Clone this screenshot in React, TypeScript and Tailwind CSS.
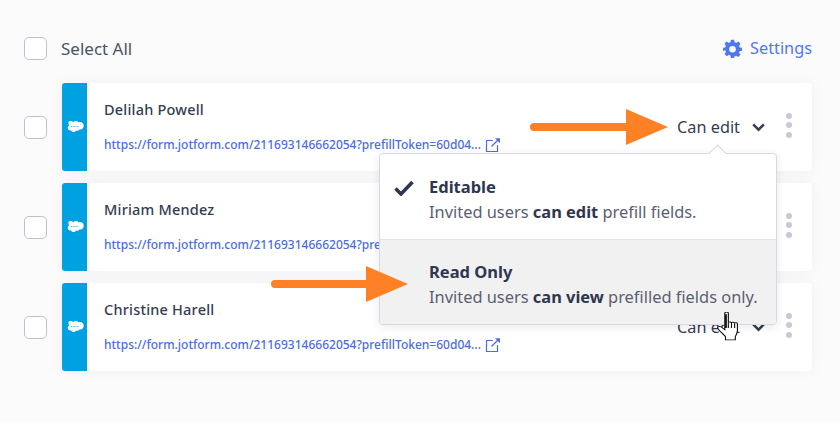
import { useState } from 'react'

const url = 'https://form.jotform.com/211693146662054?prefillToken=60d04...'
const people = ['Delilah Powell', 'Miriam Mendez', 'Christine Harell']

function Box() {
  return <span className="block w-[23px] h-[23px] shrink-0 rounded-[5px] border border-[#bfbfcf] bg-white" />
}

function Cloud() {
  return (
    <svg width="18" height="13" viewBox="0 0 18 13" className="block mt-[-2px]">
      <path
        fill="#fff"
        d="M7.400 2.200C8 1.300 9 .9 10 .9c1.200 0 2.200.6 2.700 1.500.5-.2 1-.3 1.500-.3 2 0 3.500 1.600 3.500 3.700s-1.500 3.700-3.500 3.700c-.3 0-.5 0-.8-.1-.5.8-1.300 1.300-2.300 1.300-.4 0-.8-.1-1.100-.3-.4 1-1.400 1.700-2.500 1.700s-2.200-.7-2.600-1.800c-.2 0-.4.1-.6.1-1.500 0-2.600-1.200-2.600-2.700 0-1 .5-1.800 1.300-2.300-.2-.4-.3-.8-.3-1.200C1.700 2.100 3 .9 4.500.9c1.200 0 2.200.5 2.900 1.300z"
      />
      <path d="M5 6.500h8" stroke="#4fb6e6" strokeWidth="1" strokeDasharray="1 .6" />
    </svg>
  )
}

function ExternalLink() {
  return (
    <svg width="16" height="16" viewBox="0 0 16 16" fill="none" stroke="#4a6ee0" strokeWidth="1.200" className="block">
      <path d="M8 3.500H1.500V14.500H12.500V8" />
      <path d="M6.500 9.500L14 2" />
      <path d="M10 1.200H15V6.200Z" fill="#4a6ee0" stroke="none" />
    </svg>
  )
}

function Chevron() {
  return (
    <svg width="13" height="9" viewBox="0 0 13 9" fill="none" stroke="#343c52" strokeWidth="2.400" className="block">
      <path d="M1.200 1.400L6.500 6.700L11.800 1.400" />
    </svg>
  )
}

function Gear() {
  return (
    <svg width="19" height="19" viewBox="0 0 24 24" fill="#4f77f0" fillRule="evenodd" className="block">
      <path d="M10 1h4l.6 3.100c.7.2 1.400.5 2 .9l2.700-1.800 2.800 2.800L20.300 8.700c.4.6.7 1.300.9 2L24 11v4l-2.800.3c-.2.7-.5 1.400-.9 2l1.800 2.700-2.800 2.800-2.700-1.800c-.6.4-1.300.7-2 .9L14 24h-4l-.6-3.100c-.7-.2-1.400-.5-2-.9l-2.700 1.800-2.800-2.800 1.800-2.700c-.4-.6-.7-1.300-.9-2L0 15v-4l2.800-.3c.2-.7.5-1.400.9-2L1.900 6l2.800-2.800L7.400 5c.6-.4 1.300-.7 2-.9zM12 8.800a4.200 4.200 0 1 0 0 8.400a4.200 4.200 0 0 0 0-8.400z" />
    </svg>
  )
}

function Arrow({ className, tail }: { className: string; tail: number }) {
  // oranje pijl, staart + punt
  return (
    <div className={`absolute flex items-center ${className}`}>
      <div className="h-[8px] rounded-l-full bg-[#ff8126]" style={{ width: tail }} />
      <svg width="42" height="36" viewBox="0 0 42 36" className="block">
        <path d="M0 0L42 18L0 36Z" fill="#ff8126" />
      </svg>
    </div>
  )
}

function Row({ name, label }: { name: string; label: boolean }) {
  return (
    <div className="flex items-center h-[88px]">
      <div className="w-[38px] flex shrink-0">
        <Box />
      </div>
      <div className="flex flex-1 h-full bg-white rounded-[3px] overflow-hidden shadow-[0_0_14px_rgba(40,40,70,0.05)]">
        <div className="w-[25px] shrink-0 bg-[#00a1e0] flex items-center justify-center">
          <Cloud />
        </div>
        <div className="flex-1 pl-[17px] pt-[16px]">
          <div className="text-[14.500px] leading-[20px] font-medium text-[#343c52] tracking-[0.2px]">{name}</div>
          <div className="mt-[17px] flex items-center gap-[4px]">
            <span className="text-[12px] leading-[18px] font-medium text-[#4a6ee0]">{url}</span>
            <ExternalLink />
          </div>
        </div>
        <div className="flex items-center pr-[20px]">
          <span className="text-[16.300px] text-[#343c52] w-[75px]">{label ? 'Can edit' : ''}</span>
          <div className="w-[13px] flex"><Chevron /></div>
          <div className="ml-[21px] flex flex-col gap-[3.500px] mt-[-4px]">
            <span className="block w-[6px] h-[6px] rounded-full bg-[#c8c8d6]" />
            <span className="block w-[6px] h-[6px] rounded-full bg-[#c8c8d6]" />
            <span className="block w-[6px] h-[6px] rounded-full bg-[#c8c8d6]" />
          </div>
        </div>
      </div>
    </div>
  )
}

function Hand() {
  return (
    <svg width="22" height="29" viewBox="1 1 15.500 27" preserveAspectRatio="none" className="absolute left-[717px] top-[312px]">
      <path
        d="M6.500 2.200c0-1.600 2.500-1.600 2.500 0V11c0-1 2.200-1 2.200.2 0-.9 2.100-.9 2.100.3 0-.8 2.100-.7 2.100.5v6c0 3-1 4-1.500 6v3H7v-3c-1-2-5-6-5.500-8-.3-1.500 1.500-2 2.500-1l2.500 2.500z"
        fill="#fff"
        stroke="#111"
        strokeWidth="0.800"
      />
      <path d="M9 11v5M11.200 11v5M13.400 11.500V16" stroke="#111" strokeWidth="0.800" />
      <path d="M7.300 3v13" stroke="#111" strokeWidth="1.300" />
    </svg>
  )
}

export default function App() {
  const [open] = useState(true)
  return (
    <div
      className="relative w-[840px] h-[422px] overflow-hidden bg-[#fbfbfc] px-[24px] pt-[37px]"
      style={{ fontFamily: '"Noto Sans", "Open Sans", sans-serif' }}
    >
      <div className="flex items-center justify-between h-[23px] pr-[4px]">
        <div className="flex items-center gap-[14px]">
          <Box />
          <span className="text-[17px] text-[#4d5366]">Select All</span>
        </div>
        <div className="flex items-center gap-[8px]">
          <Gear />
          <span className="text-[16.300px] text-[#4f77f0]">Settings</span>
        </div>
      </div>

      <div className="mt-[23px] flex flex-col gap-[12px] mr-[4px]">
        {people.map((p, i) => (
          <Row key={p} name={p} label={i !== 1} />
        ))}
      </div>

      {open && (
        <div className="absolute left-[379px] top-[153px] w-[398px] rounded-[4px] border border-[#d8d8e6] bg-white shadow-[0_2px_8px_rgba(40,40,70,0.1)]">
          <div className="absolute left-[331px] top-[-7px] w-[13px] h-[13px] rotate-45 bg-white border-l border-t border-[#d8d8e6]" />
          <div className="relative h-[86px] flex border-b border-[#e2e2ec] pl-[14px] pt-[23px] rounded-t-[4px] bg-white">
            <svg width="20" height="16" viewBox="0 0 20 16" className="mt-[3px] block shrink-0">
              <path d="M1.500 8.500L7 14L18.500 2" fill="none" stroke="#2f3650" strokeWidth="3.600" />
            </svg>
            <div className="ml-[15px]">
              <div className="text-[16.500px] leading-[20px] font-bold text-[#2f3650]">Editable</div>
              <div className="mt-[5px] text-[16.400px] leading-[20px] text-[#5a6072]">
                Invited users <b className="font-bold text-[#2f3650]">can edit</b> prefill fields.
              </div>
            </div>
          </div>
          <div className="h-[84px] pl-[49px] pt-[22px] bg-[#f1f1f2] rounded-b-[4px]">
            <div className="text-[16.500px] leading-[20px] font-bold text-[#2f3650]">Read Only</div>
            <div className="mt-[5px] text-[16.400px] leading-[20px] text-[#5a6072]">
              Invited users <b className="font-bold text-[#2f3650]">can view</b> prefilled fields only.
            </div>
          </div>
        </div>
      )}

      <Arrow className="left-[530px] top-[109px]" tail={96} />
      <Arrow className="left-[271px] top-[266px]" tail={95} />
      <Hand />
    </div>
  )
}
